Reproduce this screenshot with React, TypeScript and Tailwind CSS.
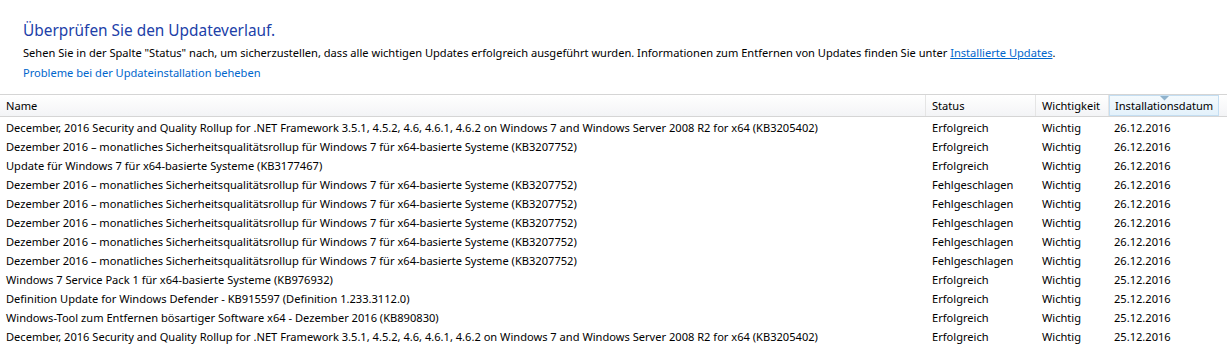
const rows: [string, string, string][] = [
	['December, 2016 Security and Quality Rollup for .NET Framework 3.5.1, 4.5.2, 4.6, 4.6.1, 4.6.2 on Windows 7 and Windows Server 2008 R2 for x64 (KB3205402)', 'Erfolgreich', '26.12.2016'],
	['Dezember 2016 – monatliches Sicherheitsqualitätsrollup für Windows 7 für x64-basierte Systeme (KB3207752)', 'Erfolgreich', '26.12.2016'],
	['Update für Windows 7 für x64-basierte Systeme (KB3177467)', 'Erfolgreich', '26.12.2016'],
	['Dezember 2016 – monatliches Sicherheitsqualitätsrollup für Windows 7 für x64-basierte Systeme (KB3207752)', 'Fehlgeschlagen', '26.12.2016'],
	['Dezember 2016 – monatliches Sicherheitsqualitätsrollup für Windows 7 für x64-basierte Systeme (KB3207752)', 'Fehlgeschlagen', '26.12.2016'],
	['Dezember 2016 – monatliches Sicherheitsqualitätsrollup für Windows 7 für x64-basierte Systeme (KB3207752)', 'Fehlgeschlagen', '26.12.2016'],
	['Dezember 2016 – monatliches Sicherheitsqualitätsrollup für Windows 7 für x64-basierte Systeme (KB3207752)', 'Fehlgeschlagen', '26.12.2016'],
	['Dezember 2016 – monatliches Sicherheitsqualitätsrollup für Windows 7 für x64-basierte Systeme (KB3207752)', 'Fehlgeschlagen', '26.12.2016'],
	['Windows 7 Service Pack 1 für x64-basierte Systeme (KB976932)', 'Erfolgreich', '25.12.2016'],
	['Definition Update for Windows Defender - KB915597 (Definition 1.233.3112.0)', 'Erfolgreich', '25.12.2016'],
	['Windows-Tool zum Entfernen bösartiger Software x64 - Dezember 2016 (KB890830)', 'Erfolgreich', '25.12.2016'],
	['December, 2016 Security and Quality Rollup for .NET Framework 3.5.1, 4.5.2, 4.6, 4.6.1, 4.6.2 on Windows 7 and Windows Server 2008 R2 for x64 (KB3205402)', 'Erfolgreich', '25.12.2016'],
]

function HeaderCell({ label, className }: { label: string; className: string }) {
	return (
		<div className={`h-full flex items-center border-r border-[#e5e5e5] px-[6px] pt-[2px] ${className}`}>
			{label}
		</div>
	)
}

export default function App() {
	return (
		<div className="w-[1227px] h-[358px] bg-white overflow-hidden text-[11.1px] text-black" style={{ fontFamily: '"Segoe UI", "Noto Sans", sans-serif' }}>
			<div className="pl-[23px] pt-[20px]">
				<h1 className="text-[15.4px] leading-[22px] text-[#2040a8]">Überprüfen Sie den Updateverlauf.</h1>
				<p className="mt-[3px] leading-[16px]">
					Sehen Sie in der Spalte "Status" nach, um sicherzustellen, dass alle wichtigen Updates erfolgreich ausgeführt wurden. Informationen zum Entfernen von Updates finden Sie unter{' '}
					<span className="text-[#0066cc] underline">Installierte Updates</span>.
				</p>
				<p className="mt-[4px] leading-[16px] text-[#0066cc]">Probleme bei der Updateinstallation beheben</p>
			</div>

			<div className="mt-[13px]">
				<div className="h-[23px] flex border-t border-b border-[#d5d5d5] bg-gradient-to-b from-white to-[#f3f4f6]">
					<HeaderCell label="Name" className="w-[926px]" />
					<HeaderCell label="Status" className="w-[110px]" />
					<HeaderCell label="Wichtigkeit" className="w-[73px]" />
					<div className="relative w-[110px] h-full flex items-center px-[5px] pt-[2px] border border-[#c4def2] bg-gradient-to-b from-[#f4fafd] to-[#e3f1fb]">
						Installationsdatum
						<svg className="absolute left-[50px] top-[0px]" width="9" height="5" viewBox="0 0 9 5">
							<path d="M0 0 H9 L4.5 4.5 Z" fill="#8fb2cc" />
						</svg>
					</div>
					<div className="flex-1" />
				</div>
				<div className="pt-[1px]">
					{rows.map(([name, status, date], i) => (
						<div key={i} className="h-[19px] flex items-center leading-[19px]">
							<div className="w-[926px] pl-[6px] whitespace-nowrap">{name}</div>
							<div className="w-[110px] pl-[6px]">{status}</div>
							<div className="w-[73px] pl-[6px]">Wichtig</div>
							<div className="w-[110px] pl-[5px]">{date}</div>
						</div>
					))}
				</div>
			</div>
		</div>
	)
}
